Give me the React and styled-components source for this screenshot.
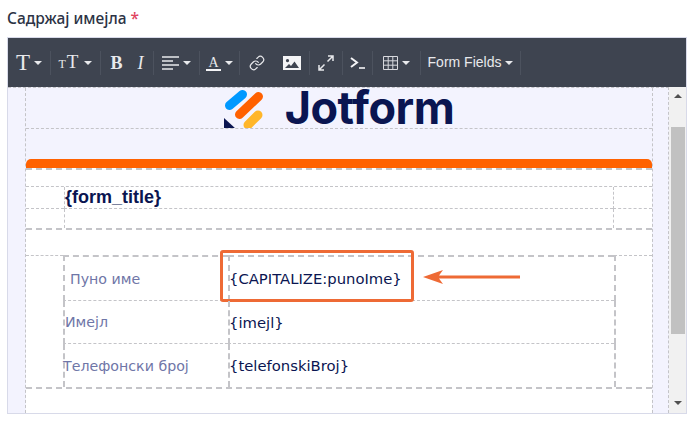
import styled, { createGlobalStyle } from "styled-components";
import { Link } from "lucide-react";

const GlobalStyle = createGlobalStyle`
    html, body {
        margin: 0;
        background: #fff;
    }
`

function AlignIcon() {
    return (
        <svg width="17" height="14" viewBox="0 0 17 14">
            <path d="M0 1h17M0 5h11M0 9h17M0 13h11" stroke="#e8e9ec" strokeWidth="1.6" />
        </svg>
    );
}

function ImageIcon() {
    return (
        <svg width="18" height="14" viewBox="0 0 18 14">
            <path fill="#f4f4f6" fillRule="evenodd" d="M0 0h18v14H0zM2 12h14L11.5 5.5 8 10 6 8z M4.5 3a1.6 1.6 0 1 0 .01 0z" />
        </svg>
    );
}

function ExpandIcon() {
    return (
        <svg width="16" height="16" viewBox="0 0 16 16" fill="none" stroke="#e8e9ec" strokeWidth="1.5">
            <path d="M9.5 6.5 15 1M10 1h5v5M6.5 9.5 1 15M1 10v5h5" />
        </svg>
    );
}

function TerminalIcon() {
    return (
        <svg width="15" height="12" viewBox="0 0 15 12" fill="none" stroke="#f4f4f6">
            <path d="M1 1l6 4.5-6 4.5" strokeWidth="2" />
            <path d="M9 11h6" strokeWidth="1.6" />
        </svg>
    );
}

function TableIcon() {
    return (
        <svg width="15" height="14" viewBox="0 0 15 14" fill="none" stroke="#d8d9de" strokeWidth="1">
            <path d="M.5.5h14v13H.5zM5.2.5v13M9.8.5v13M.5 4.8h14M.5 9.2h14" />
        </svg>
    );
}

function LogoMark() {
    return (
        <LogoSvg width="40" height="40" viewBox="0 1 40 40">
            <path d="M0 31 12 42H0z" fill="#0a1551" />
            <path d="M5.5 18.5 18.5 7.5" stroke="#0099ff" strokeWidth="9" strokeLinecap="round" />
            <path d="M15.5 27.5 34.5 9.5" stroke="#ff6100" strokeWidth="9" strokeLinecap="round" />
            <path d="M24 38 34 28" stroke="#ffb629" strokeWidth="9" strokeLinecap="round" />
        </LogoSvg>
    );
}

const rows = [
    { label: "Пуно име", value: "{CAPITALIZE:punoIme}", indent: 5, height: 46, marked: true },
    { label: "Имејл", value: "{imejl}", indent: 0, height: 43 },
    { label: "Телефонски број", value: "{telefonskiBroj}", indent: -2, height: 43 },
];

export default function App() {
    return (
        <Page>
            <GlobalStyle />
            <Label>Садржај имејла <Star>*</Star></Label>
            <Editor>
                <Toolbar>
                    <Group $w={43}><BigT>T</BigT><Caret /></Group>
                    <Group $w={50}>
                        <SizeT><small>T</small>T</SizeT>
                        <Caret />
                    </Group>
                    <Group $w={53} $gap={15}><BoldB>B</BoldB><ItalicI>I</ItalicI></Group>
                    <Group $w={46}><AlignIcon /><Caret /></Group>
                    <Group $w={40}><ColorA>A</ColorA><Caret /></Group>
                    <Group $w={70} $gap={18}>
                        <Link size={16} color="#e8e9ec" strokeWidth={1.8} />
                        <ImageIcon />
                    </Group>
                    <Group $w={33}><ExpandIcon /></Group>
                    <Group $w={30}><TerminalIcon /></Group>
                    <Group $w={48}><TableIcon /><Caret /></Group>
                    <Group $w={100}><FieldsText>Form Fields</FieldsText><Caret /></Group>
                </Toolbar>
                <Body>
                    <Canvas>
                        <Sheet>
                            <Header>
                                <LogoMark />
                                <LogoText>Jotform</LogoText>
                            </Header>
                            <Spacer />
                            <OrangeBar />
                            <White>
                                <TitleTop />
                                <TitleGrid>
                                    <TitleCell $h={22} />
                                    <TitleCell $h={22} $middle>
                                        <FormTitle>{"{form_title}"}</FormTitle>
                                    </TitleCell>
                                    <TitleCell $h={22} $last />
                                    <TitleCell $h={19} />
                                    <TitleCell $h={19} $middle />
                                    <TitleCell $h={19} $last />
                                </TitleGrid>
                                <Gap />
                                <FieldsGrid>
                                    {rows.map((row, i) => (
                                        <FieldRow key={row.label} style={{ height: row.height }}>
                                            <Side $first={i === 0} />
                                            <FieldLabel $indent={row.indent} $first={i === 0} $end={i === rows.length - 1}>
                                                <span>{row.label}</span>
                                            </FieldLabel>
                                            <FieldValue $first={i === 0} $end={i === rows.length - 1}>
                                                <span>{row.value}</span>
                                                {row.marked && <Highlight />}
                                                {row.marked && (
                                                    <Arrow width="97" height="16" viewBox="0 0 97 16">
                                                        <path d="M0 8 20 1 16 6.6H97V9.4H16L20 15z" fill="#ee6a35" />
                                                    </Arrow>
                                                )}
                                            </FieldValue>
                                            <Side $last $first={i === 0} />
                                        </FieldRow>
                                    ))}
                                </FieldsGrid>
                            </White>
                        </Sheet>
                    </Canvas>
                    <Scrollbar>
                        <ScrollUp />
                        <Thumb />
                        <ScrollDown />
                    </Scrollbar>
                </Body>
            </Editor>
        </Page>
    );
}

const Page = styled.div`
    width: 700px;
    height: 423px;
    padding: 8px 0 0 7px;
    box-sizing: border-box;
    overflow: hidden;
`

const Label = styled.div`
    font-family: "Noto Sans", sans-serif;
    font-size: 15.5px;
    font-weight: 500;
    line-height: 20px;
    color: #2c3345;
    margin-bottom: 9px;
`

const Star = styled.span`
    color: #e0455f;
`

const Editor = styled.div`
    width: 680px;
    height: 377px;
    box-sizing: border-box;
    border: 1px solid #d8dae9;
    display: flex;
    flex-direction: column;
`

const Toolbar = styled.div`
    height: 49px;
    flex: none;
    background: #3e4450;
    display: flex;
    align-items: center;
`

const Group = styled.div`
    width: ${(p) => p.$w}px;
    height: 24px;
    flex: none;
    box-sizing: border-box;
    border-right: 1px solid #4c525e;
    display: flex;
    align-items: center;
    justify-content: center;
    gap: ${(p) => p.$gap ?? 4}px;
    color: #e8e9ec;
    font-family: "Liberation Serif", serif;
`

const Caret = styled.span`
    width: 0;
    height: 0;
    border-left: 4px solid transparent;
    border-right: 4px solid transparent;
    border-top: 4px solid #e8e9ec;
`

const BigT = styled.span`
    font-size: 23px;
    line-height: 24px;
`

const SizeT = styled.span`
    font-size: 19px;
    line-height: 24px;
    margin-right: 2px;

    small {
        font-size: 12px;
        margin-right: 1px;
    }
`

const BoldB = styled.span`
    font-size: 18px;
    font-weight: 700;
    line-height: 24px;
`

const ItalicI = styled.span`
    font-size: 18px;
    font-style: italic;
    line-height: 24px;
`

const ColorA = styled.span`
    font-size: 14px;
    line-height: 13px;
    width: 15px;
    text-align: center;
    border-bottom: 2px solid #f4f4f6;
    margin-top: 1px;
`

const FieldsText = styled.span`
    font-family: "Liberation Sans", sans-serif;
    font-size: 14px;
    line-height: 16px;
    margin-top: -2px;
    color: #e8e9ec;
`

const Body = styled.div`
    flex: 1;
    display: flex;
    min-height: 0;
`

const Canvas = styled.div`
    width: 661px;
    flex: none;
    background: #f3f3fe;
    border-top: 1px dashed #c4c4c8;
    border-right: 1px dashed #c4c4c8;
    box-sizing: border-box;
    overflow: hidden;
    padding: 0 15px 0 17px;
`

const Sheet = styled.div`
    height: 100%;
    display: flex;
    flex-direction: column;
    border-left: 1px dashed #c4c4c8;
    border-right: 1px dashed #c4c4c8;
`

const Header = styled.div`
    height: 41px;
    flex: none;
    box-sizing: border-box;
    border-bottom: 1px dashed #c4c4c8;
    display: flex;
    align-items: flex-start;
    justify-content: center;
    gap: 21px;
`

const LogoSvg = styled.svg`
    flex: none;
`

const LogoText = styled.span`
    font-family: Inter, sans-serif;
    font-size: 45px;
    font-weight: 700;
    line-height: 40px;
    letter-spacing: -0.5px;
    color: #0a1551;
`

const Spacer = styled.div`
    height: 30px;
    flex: none;
`

const OrangeBar = styled.div`
    height: 9px;
    flex: none;
    background: #ff6100;
    border-radius: 5px 5px 0 0;
`

const White = styled.div`
    flex: 1;
    background: #fff;
`

const TitleTop = styled.div`
    height: 19px;
    box-sizing: border-box;
    border-top: 2px dashed #c4c4c8;
    border-bottom: 1px dashed #c4c4c8;
`

const TitleGrid = styled.div`
    display: grid;
    grid-template-columns: 38px 1fr 39px;
    border-bottom: 2px dashed #c4c4c8;
`

const TitleCell = styled.div`
    height: ${(p) => p.$h}px;
    box-sizing: border-box;
    border-bottom: ${(p) => (p.$h === 22 ? "1px dashed #c4c4c8" : "none")};
    border-left: ${(p) => (p.$middle || p.$last ? "1px dashed #c4c4c8" : "none")};
    display: flex;
    align-items: center;
`

const FormTitle = styled.span`
    font-family: "Liberation Sans", sans-serif;
    font-size: 18px;
    font-weight: 700;
    color: #0a1551;
`

const Gap = styled.div`
    height: 25px;
`

const FieldsGrid = styled.div`
    border-bottom: 2px dashed #c4c4c8;
`

const FieldRow = styled.div`
    display: grid;
    grid-template-columns: 37px 165px 386px 1fr;
`

const Side = styled.div`
    border-top: ${(p) => (p.$first ? "1px dashed #c4c4c8" : "none")};
    border-left: ${(p) => (p.$last ? "2px dashed #c4c4c8" : "none")};
`

const FieldLabel = styled.div`
    border-left: 2px dashed #c4c4c8;
    border-top: ${(p) => (p.$first ? "2px dashed #c4c4c8" : "none")};
    border-bottom: ${(p) => (p.$end ? "none" : "1px dashed #c4c4c8")};
    display: flex;
    align-items: center;
    font-family: "DejaVu Sans", sans-serif;
    font-size: 14.2px;
    color: #6f76a7;

    span {
        margin-left: ${(p) => p.$indent}px;
    }
`

const FieldValue = styled.div`
    position: relative;
    border-left: 2px dashed #c4c4c8;
    border-top: ${(p) => (p.$first ? "2px dashed #c4c4c8" : "none")};
    border-bottom: ${(p) => (p.$end ? "none" : "1px dashed #c4c4c8")};
    display: flex;
    align-items: center;
    font-family: "DejaVu Sans", sans-serif;
    font-size: 14.8px;
    color: #0a1551;

    span {
        margin-left: -1px;
    }
`

const Highlight = styled.div`
    position: absolute;
    left: -10px;
    top: -7px;
    width: 194px;
    height: 52px;
    box-sizing: border-box;
    border: 3px solid #ee6a35;
    border-radius: 3px;
`

const Arrow = styled.svg`
    position: absolute;
    left: 193px;
    top: 12px;
`

const Scrollbar = styled.div`
    flex: 1;
    background: #f1f1f1;
    display: flex;
    flex-direction: column;
    align-items: center;
`

const ScrollUp = styled.div`
    width: 0;
    height: 0;
    margin-top: 7px;
    border-left: 4px solid transparent;
    border-right: 4px solid transparent;
    border-bottom: 4px solid #505050;
`

const Thumb = styled.div`
    width: 14px;
    height: 207px;
    margin-top: 29px;
    background: #c1c1c1;
`

const ScrollDown = styled.div`
    width: 0;
    height: 0;
    margin-top: 67px;
    border-left: 4px solid transparent;
    border-right: 4px solid transparent;
    border-top: 4px solid #505050;
`
